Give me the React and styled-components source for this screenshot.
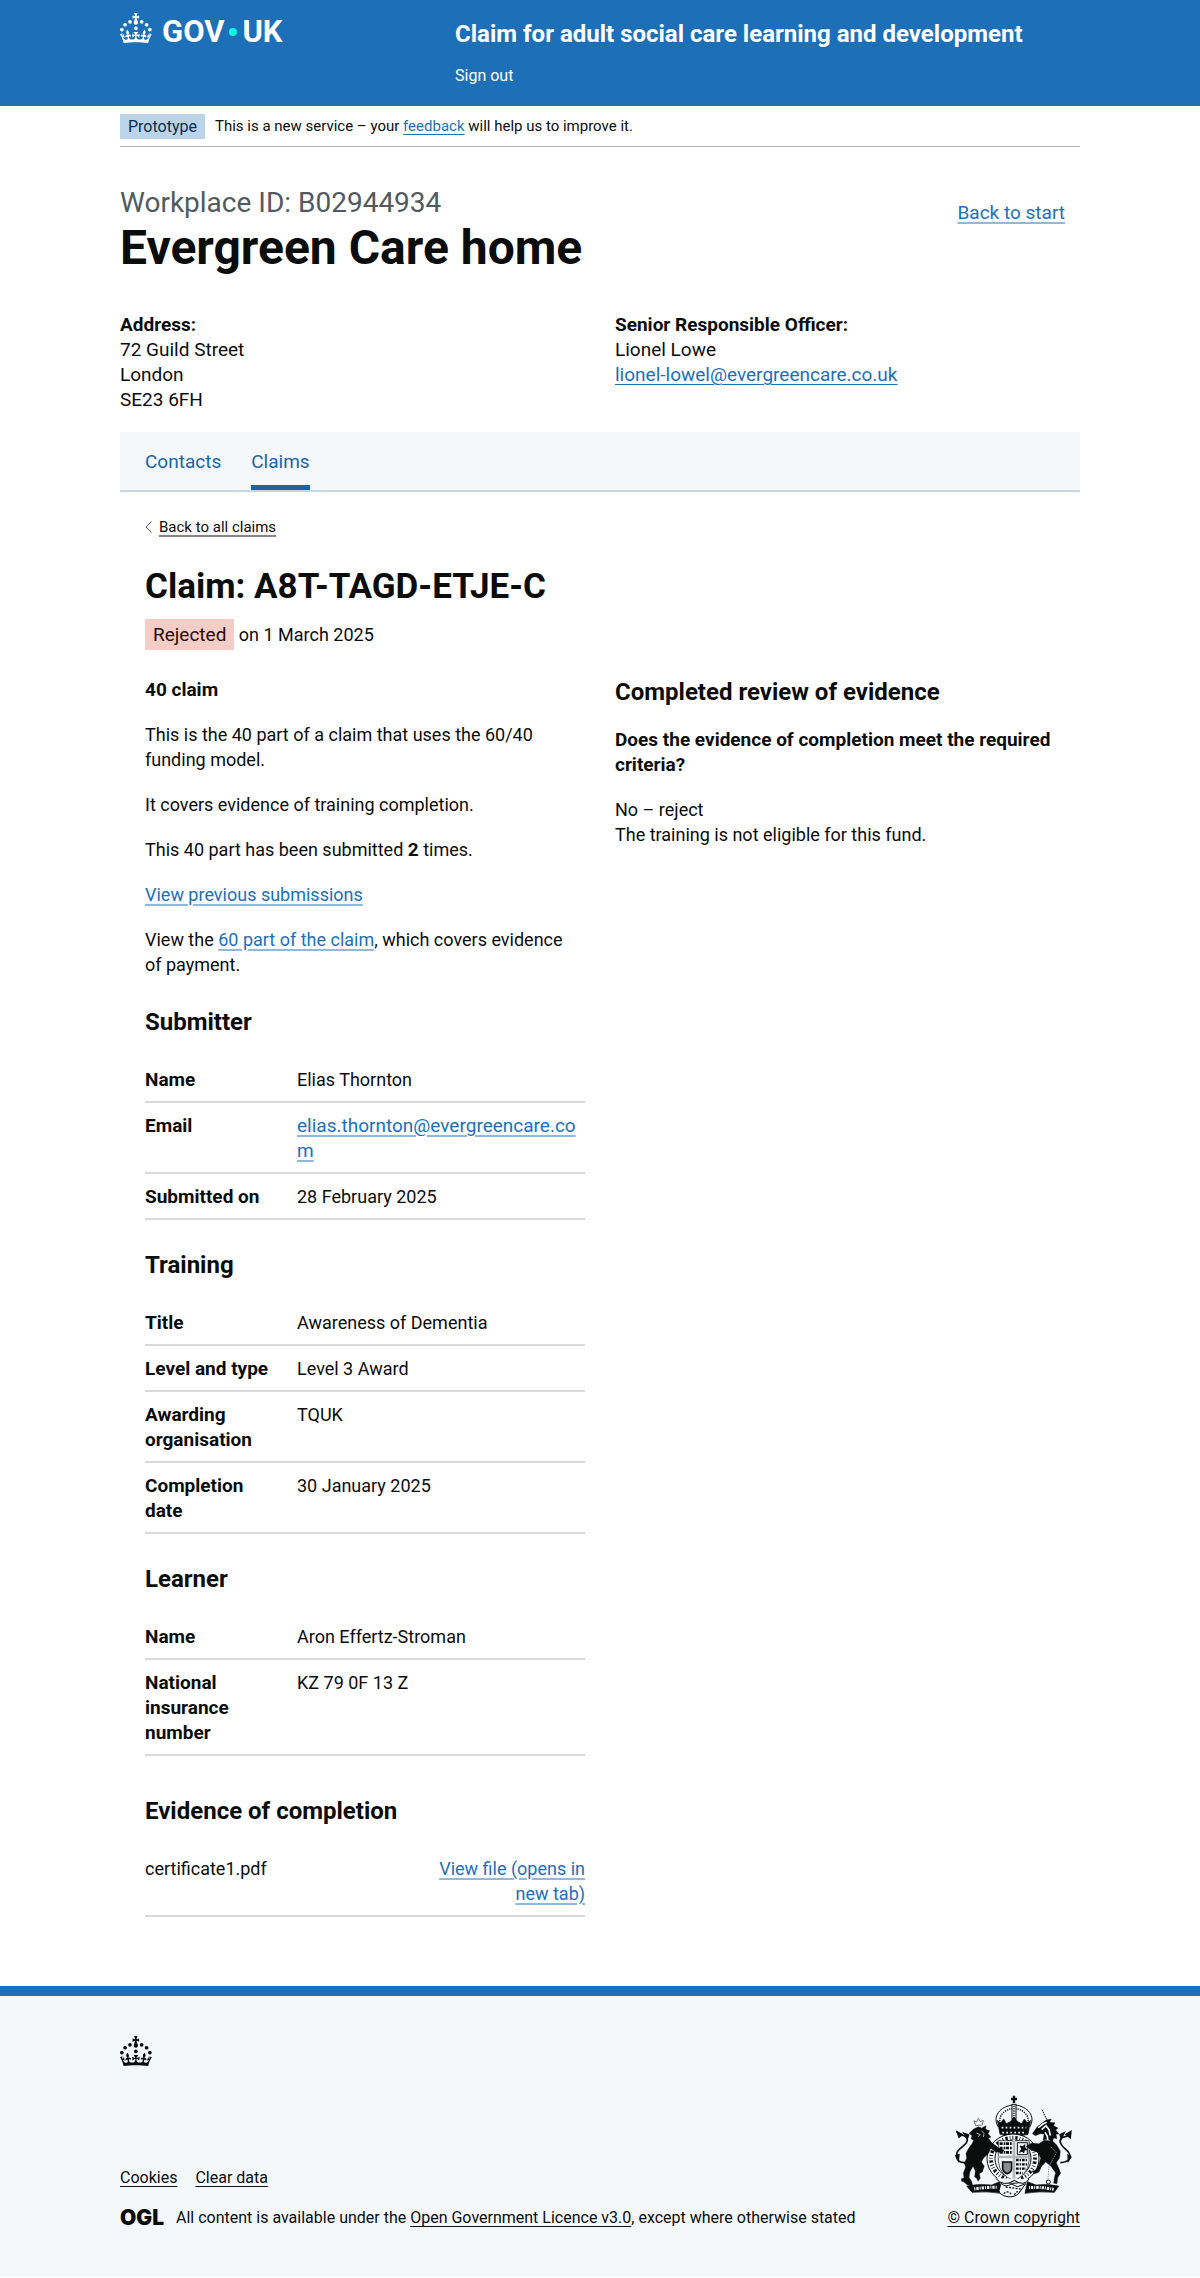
import React from "react";
import styled, { createGlobalStyle, css } from "styled-components";

const color = {
  text: "#0b0c0c",
  muted: "#505a5f",
  brand: "#1d70b8",
  link: "#1d70b8",
  navLink: "#1a65a6",
  surface: "#f4f8fb",
  rule: "#d8d9da",
};

const GlobalStyle = createGlobalStyle`
  *, *::before, *::after { box-sizing: border-box; }
  body {
    margin: 0;
    background: #fff;
    color: ${color.text};
    font-family: Roboto, "Liberation Sans", sans-serif;
    font-size: 18px;
    line-height: 25px;
  }
`;

const Container = styled.div`
  max-width: 960px;
  margin: 0 auto;
`;

const Link = styled.a`
  color: ${color.link};
  font-size: ${(p) => (p.$large ? "19px" : "inherit")};
  text-decoration: underline;
  text-decoration-color: ${(p) => (p.$solid ? "currentColor" : "#8eb8dc")};
  text-decoration-thickness: ${(p) => (p.$solid ? "1px" : "2px")};
  text-underline-offset: 3px;
`;

const DarkLink = styled(Link)`
  color: ${color.text};
  text-decoration-color: ${(p) => (p.$solid ? "currentColor" : "#858686")};
`;

/* Header */

const HeaderBar = styled.header`
  background: ${color.brand};
  color: #fff;
`;

const HeaderGrid = styled(Container)`
  display: grid;
  grid-template-columns: 1fr 2fr;
  column-gap: 15px;
  padding: 13px 0 20px;
`;

const HomeLink = styled.a`
  display: flex;
  align-self: start;
  align-items: center;
  gap: 10px;
  height: 30px;
  color: #fff;
  text-decoration: none;
`;

const Wordmark = styled.span`
  display: flex;
  align-items: center;
  gap: 5px;
  padding-top: 8px;
  font-size: 31px;
  font-weight: 700;
  line-height: 30px;
`;

const Dot = styled.span`
  width: 8px;
  height: 8px;
  border-radius: 50%;
  background: #00ffe0;
`;

const HeaderContent = styled.div`
  display: flex;
  flex-direction: column;
  align-items: flex-start;
  gap: 17px;
  padding: 6px 0 0 5px;
`;

const ServiceName = styled.a`
  color: #fff;
  font-size: 24px;
  font-weight: 700;
  line-height: 30px;
  text-decoration: none;
`;

const HeaderNavLink = styled.a`
  display: block;
  color: #fff;
  font-size: 16px;
  line-height: 20px;
  text-decoration: none;
`;

/* Phase banner */

const PhaseBanner = styled.div`
  display: flex;
  align-items: center;
  gap: 10px;
  padding: 8px 0 7px;
  border-bottom: 1px solid #b1b4b6;
  font-size: 15px;
  line-height: 25px;
`;

const PhaseTag = styled.strong`
  padding: 0 8px;
  background: #bbd4ea;
  color: #0c2d4a;
  font-size: 16px;
  font-weight: 400;
`;

/* Organisation */

const Main = styled.main`
  padding: 41px 0 69px;
`;

const TitleRow = styled.div`
  display: flex;
  justify-content: space-between;
  align-items: flex-start;
  margin-bottom: 39px;
`;

const Caption = styled.span`
  display: block;
  margin-bottom: 5px;
  color: ${color.muted};
  font-size: 28px;
  font-weight: 400;
  line-height: 30px;
`;

const PageTitle = styled.h1`
  margin: 0;
  font-size: 48px;
  font-weight: 700;
  line-height: 50px;
`;

const TitleAction = styled.div`
  padding: 12px 15px 0 0;
`;

const Columns = styled.div`
  display: grid;
  grid-template-columns: 1fr 1fr;
  column-gap: 30px;
`;

const Strong = styled.strong`
  font-size: 19px;
  font-weight: 700;
`;

const Lines = styled.address`
  display: flex;
  flex-direction: column;
  align-items: flex-start;
  font-size: 19px;
  font-style: normal;
`;

const SubNav = styled.nav`
  display: flex;
  gap: 30px;
  margin-top: 20px;
  padding: 0 25px;
  background: ${color.surface};
  border-bottom: 2px solid #c1d6e9;
`;

const SubNavLink = styled.a`
  padding: 17px 0 11px;
  border-bottom: 5px solid transparent;
  color: ${color.navLink};
  font-size: 19px;
  text-decoration: none;
  ${(p) =>
    p.$current &&
    css`
      border-bottom-color: ${color.navLink};
    `}
`;

/* Claim */

const ClaimHeader = styled.div`
  display: flex;
  flex-direction: column;
  align-items: flex-start;
  padding: 25px 0 30px 25px;
`;

const BackLinkRow = styled.div`
  display: flex;
  align-items: center;
  gap: 7px;
  margin-bottom: 30px;
  font-size: 15px;
  line-height: 20px;
`;

const ClaimTitle = styled.h2`
  margin: 0 0 15px;
  font-size: 35px;
  font-weight: 700;
  line-height: 40px;
`;

const Status = styled.p`
  margin: 0;
`;

const StatusTag = styled.strong`
  padding: 4px 8px;
  background: #f4cdc6;
  color: #2a0b06;
  font-size: 19px;
  font-weight: 400;
`;

const Details = styled.div`
  padding-left: 25px;
`;

const Heading = styled.h3`
  margin: ${(p) => p.$top || "0"} 0 20px;
  font-size: 24px;
  font-weight: 700;
  line-height: 30px;
`;

const Subheading = styled.h4`
  margin: 0 0 20px;
  font-size: 19px;
  font-weight: 700;
  line-height: 25px;
`;

const Paragraph = styled.p`
  margin: 0 0 20px;
  padding-right: 10px;
`;

const SummaryList = styled.dl`
  margin: 0;
`;

const SummaryRow = styled.div`
  display: grid;
  grid-template-columns: ${(p) => (p.$file ? "3fr 2fr" : "30% 1fr")};
  column-gap: ${(p) => (p.$file ? "0" : "20px")};
  padding: 10px 0 9px;
  border-bottom: 2px solid ${color.rule};
`;

const Key = styled.dt`
  font-size: 19px;
  font-weight: 700;
`;

const Value = styled.dd`
  margin: 0;
  overflow-wrap: anywhere;
`;

const FileName = styled.dt``;

const FileAction = styled.dd`
  margin: 0;
  text-align: right;
`;

/* Footer */

const FooterBar = styled.footer`
  padding: 40px 0 49px;
  background: ${color.surface};
  border-top: 10px solid ${color.brand};
  font-size: 16px;
  line-height: 20px;
`;

const FooterMeta = styled.div`
  display: flex;
  justify-content: space-between;
  align-items: flex-end;
  margin-top: 29px;
`;

const FooterLinks = styled.ul`
  display: flex;
  gap: 18px;
  margin: 0 0 20px;
  padding: 0;
  list-style: none;
`;

const Licence = styled.div`
  display: flex;
  align-items: center;
  gap: 12px;
`;

const OglMark = styled.span`
  font-family: Inter, Roboto, sans-serif;
  font-size: 21px;
  font-weight: 900;
  line-height: 20px;
`;

const Copyright = styled(DarkLink)`
  display: flex;
  flex-direction: column;
  align-items: center;
  gap: 10px;
`;

const Block = styled.svg`
  display: block;
  flex: none;
`;

function Crown() {
  return (
    <Block width="32" height="30" viewBox="0 0 64 60" fill="currentColor" aria-hidden="true">
      <circle cx="20" cy="17.6" r="3.7" />
      <circle cx="10.2" cy="23.5" r="3.7" />
      <circle cx="3.7" cy="33.2" r="3.7" />
      <circle cx="31.7" cy="30.6" r="3.7" />
      <circle cx="43.3" cy="17.6" r="3.7" />
      <circle cx="53.2" cy="23.5" r="3.7" />
      <circle cx="59.7" cy="33.2" r="3.7" />
      <path d="M33.1,9.8c.2-.1.3-.3.5-.5l4.6,2.4v-6.8l-4.6,1.5c-.1-.2-.3-.3-.5-.5l1.9-5.9h-6.7l1.9,5.9c-.2.1-.3.3-.5.5l-4.6-1.5v6.8l4.6-2.4c.1.2.3.3.5.5l-2.6,8c-.9,2.8,1.2,5.7,4.1,5.7h0c3,0,5.1-2.9,4.1-5.7l-2.6-8ZM37,37.9s-3.4,3.8-4.1,6.1c2.2,0,4.2-.5,6.4-2.8l-.7,8.5c-2-2.8-4.4-4.1-5.7-3.8.1,3.1.5,6.7,5.8,7.2,3.7.3,6.7-1.5,7-3.8.4-2.6-2-4.3-3.7-1.6-1.4-4.5,2.4-6.1,4.9-3.2-1.9-4.5-1.8-7.7,2.4-10.9,3,4,2.6,7.3-1.2,11.1,2.4-1.3,6.2,0,4,4.6-1.2-2.8-3.7-2.2-4.2.2-.3,1.7.7,3.7,3,4.2,1.9.3,4.7-.9,7-5.9-1.3,0-2.4.7-3.9,1.7l2.4-8c.6,2.3,1.4,3.7,2.2,4.5.6-1.6.5-2.8,0-5.3l5,1.8c-2.6,3.6-5.2,8.7-7.3,17.5-7.4-1.1-15.7-1.7-24.5-1.7h0c-8.8,0-17.1.6-24.5,1.7-2.1-8.9-4.7-13.9-7.3-17.5l5-1.8c-.5,2.5-.6,3.7,0,5.3.8-.8,1.6-2.3,2.2-4.5l2.4,8c-1.5-1-2.6-1.7-3.9-1.7,2.3,5,5.2,6.2,7,5.9,2.3-.4,3.3-2.4,3-4.2-.5-2.4-3-3.1-4.2-.2-2.2-4.6,1.6-6,4-4.6-3.7-3.7-4.2-7.1-1.2-11.1,4.2,3.2,4.3,6.4,2.4,10.9,2.5-2.8,6.3-1.3,4.9,3.2-1.8-2.7-4.1-1-3.7,1.6.3,2.3,3.3,4.1,7,3.8,5.4-.5,5.7-4.2,5.8-7.2-1.3-.2-3.7,1-5.7,3.8l-.7-8.5c2.2,2.3,4.2,2.7,6.4,2.8-.7-2.3-4.1-6.1-4.1-6.1h10.6,0Z" />
    </Block>
  );
}

function Crest() {
  const ink = color.text;
  const paper = color.surface;
  return (
    <Block width="117" height="103" viewBox="110 76 351 309" fill="none" stroke={ink} strokeWidth="4" aria-hidden="true">
      {/* royal crown */}
      <path d="M287 78v22M278 88h18" strokeWidth="7" />
      <path d="M240 172C220 140 246 110 283 106M334 172C354 140 328 110 291 106" strokeWidth="3" />
      <path d="M249 168C235 142 256 121 281 117M325 168C339 142 318 121 293 117" strokeWidth="4" strokeDasharray="4 3" />
      <rect x="281" y="104" width="12" height="44" fill={paper} strokeWidth="3" />
      <path d="M287 108v36" strokeDasharray="4 3" />
      <path d="M237 152l10 8 9-12 8 14 12-6 11-14 11 14 12 6 8-14 9 12 10-8-8 42q-42 12-84 0z" fill={ink} strokeWidth="2" />
      <path d="M250 174h74M252 189h70" stroke={paper} strokeWidth="5" strokeDasharray="5 7" />
      {/* garter and shield */}
      <ellipse cx="284" cy="267" rx="78" ry="74" fill={paper} strokeWidth="3" />
      <ellipse cx="284" cy="267" rx="66" ry="63" strokeWidth="11" strokeDasharray="3 6 7 6 2 6" />
      <ellipse cx="284" cy="267" rx="54" ry="56" fill={paper} strokeWidth="3" />
      <path d="M240 213h92v62q-4 42-46 58-42-16-46-58z" fill={paper} strokeWidth="2" />
      <path d="M244 222h36M244 235h38M244 248h36" strokeWidth="8" strokeDasharray="9 3 5 2" />
      <path d="M297 219h30v36h-30z" strokeWidth="3" />
      <path d="M304 248l6-10-5-9 9 3 5-7 1 10 6 5-8 1-2 9-4-6z" fill={ink} strokeWidth="3" />
      <path d="M253 277v20q2 12 14 15 12-4 13-15v-20z" fill="#8b8d8f" strokeWidth="5" />
      <path d="M293 271h36M293 284h34M293 297h30M293 310h20" strokeWidth="7" strokeDasharray="8 3 4 3" />
      <path d="M287 208v122M240 262h92" stroke="#b4b6b8" strokeWidth="8" />
      {/* lion */}
      <path d="M172 168l-5-15 8 4 5-11 6 10 9-4-3 14z" fill={paper} stroke="#777" strokeWidth="3" />
      <path d="M166 178l14-7 10 4 13-7-1 11 12 4-5 9 9 10-8 4 9 12 21 16 17 7-5 8-21-3-14-10-5 13-16 16-7 12 9 12-6 18-9 5 3 14-7 9-4-9-6-4 2-18-7-14-9 16-3 17 8 12 3 13-17-3-9-8-7-2-1-8 8-2-2-15 7-18-4-11 7-15-2-15 8-15 10-14 5-10-8-5 3-9-9-7z" fill={ink} strokeWidth="1" />
      <path d="M174 190l12 5-7 6M189 183l8 8-2 11" stroke={paper} strokeWidth="2" />
      <path d="M140 279c-30 1-31-29-14-43 17-13 26-22 18-33-7-10-22-2-28-17" strokeWidth="5" />
      <path d="M122 203l-6-17 16 9zM136 190l15 6-4 12zM112 258l10-3-2 18z" fill={ink} />
      {/* unicorn */}
      <path d="M371 120l17 35" strokeWidth="3" strokeDasharray="5 2" />
      <path d="M356 172l27-21 16-3-5 10 16 1-4 9 13 7-7 6 10 12-9 1 3 13-10-2-4 12-13-8-14 2 2-18-11-1-15 6-9-6z" fill={ink} strokeWidth="1" />
      <path d="M360 174l14-11 11-5M370 180l13-12 9 12 4 18M380 188l7 12 1 11" stroke={paper} strokeWidth="5" />
      <path d="M340 220l22 2 15-10 26 2 12 12 11 18-2 20-10 15 8 18 5 14-9 13-2 18-10-1 3-21 3-10-14-20-16-13-12 13-8 17-14 6-7-9 12-3 8-16 6-19-7-17-23-9-13-10z" fill={ink} strokeWidth="1" />
      <path d="M398 232l16 17-10 18-12 24-3 36" stroke="#8b8d8f" strokeWidth="3" strokeDasharray="4 3" />
      <circle cx="390" cy="337" r="6" strokeWidth="3" />
      <path d="M426 279c36-2 34-25 17-39-14-12-23-24-14-34 7-9 20-1 27-15" strokeWidth="5" />
      <path d="M456 205l2-20-15 9zM438 189l-13 6 4 12zM458 262l-9-6 1 18z" fill={ink} />
      {/* motto scroll */}
      <path d="M145 349q38-7 75-3l24-10 4 35q-44-7-87-3z" fill={ink} strokeWidth="2" />
      <path d="M421 349q-38-7-68-3l-26-10-7 35q45-7 88-3z" fill={ink} strokeWidth="2" />
      <path d="M168 358q36-6 70-5M332 354q34-3 74 5" stroke={paper} strokeWidth="9" strokeDasharray="3 3 7 3" />
      <path d="M232 326q24 28 56 6 30 20 44-4M248 341q16 14 30 2l20 8 24-9-20 28q-12 14-36 11-22-5-24-18z" fill={paper} strokeWidth="3" />
      <path d="M256 372q14-12 24 4M288 376q6-14 18-9M262 352l50 7" strokeWidth="4" strokeDasharray="6 4" />
    </Block>
  );
}

const submitter = [
  { key: "Name", value: "Elias Thornton" },
  { key: "Email", value: "elias.thornton@evergreencare.com", email: true },
  { key: "Submitted on", value: "28 February 2025" },
];

const training = [
  { key: "Title", value: "Awareness of Dementia" },
  { key: "Level and type", value: "Level 3 Award" },
  { key: "Awarding organisation", value: "TQUK" },
  { key: "Completion date", value: "30 January 2025" },
];

const learner = [
  { key: "Name", value: "Aron Effertz-Stroman" },
  { key: "National insurance number", value: "KZ 79 0F 13 Z" },
];

function Summary({ rows }) {
  return (
    <SummaryList>
      {rows.map((row) => (
        <SummaryRow key={row.key}>
          <Key>{row.key}</Key>
          <Value>
            {row.email ? (
              <Link $large href={`mailto:${row.value}`}>
                {row.value}
              </Link>
            ) : (
              row.value
            )}
          </Value>
        </SummaryRow>
      ))}
    </SummaryList>
  );
}

export default function App() {
  return (
    <>
      <GlobalStyle />
      <HeaderBar>
        <HeaderGrid>
          <HomeLink href="#home">
            <Crown />
            <Wordmark>
              GOV
              <Dot />
              UK
            </Wordmark>
          </HomeLink>
          <HeaderContent>
            <ServiceName href="#service">
              Claim for adult social care learning and development
            </ServiceName>
            <nav>
              <HeaderNavLink href="#sign-out">Sign out</HeaderNavLink>
            </nav>
          </HeaderContent>
        </HeaderGrid>
      </HeaderBar>

      <Container>
        <PhaseBanner>
          <PhaseTag>Prototype</PhaseTag>
          <span>
            This is a new service – your{" "}
            <Link $solid href="#feedback">
              feedback
            </Link>{" "}
            will help us to improve it.
          </span>
        </PhaseBanner>

        <Main>
          <TitleRow>
            <PageTitle>
              <Caption>Workplace ID: B02944934</Caption>
              Evergreen Care home
            </PageTitle>
            <TitleAction>
              <Link $large href="#start">
                Back to start
              </Link>
            </TitleAction>
          </TitleRow>

          <Columns>
            <Lines>
              <Strong>Address:</Strong>
              <span>72 Guild Street</span>
              <span>London</span>
              <span>SE23 6FH</span>
            </Lines>
            <Lines>
              <Strong>Senior Responsible Officer:</Strong>
              <span>Lionel Lowe</span>
              <Link $solid href="mailto:lionel-lowel@evergreencare.co.uk">
                lionel-lowel@evergreencare.co.uk
              </Link>
            </Lines>
          </Columns>

          <SubNav aria-label="Organisation">
            <SubNavLink href="#contacts">Contacts</SubNavLink>
            <SubNavLink href="#claims" $current aria-current="page">
              Claims
            </SubNavLink>
          </SubNav>

          <ClaimHeader>
            <BackLinkRow>
              <Block width="7" height="12" viewBox="0 0 7 12" fill="none" stroke={color.muted} aria-hidden="true">
                <path d="M6.5 .5 1 6l5.5 5.5" />
              </Block>
              <DarkLink href="#all-claims">Back to all claims</DarkLink>
            </BackLinkRow>
            <ClaimTitle>Claim: A8T-TAGD-ETJE-C</ClaimTitle>
            <Status>
              <StatusTag>Rejected</StatusTag> on 1 March 2025
            </Status>
          </ClaimHeader>

          <Columns>
            <Details>
              <Subheading>40 claim</Subheading>
              <Paragraph>
                This is the 40 part of a claim that uses the 60/40 funding model.
              </Paragraph>
              <Paragraph>It covers evidence of training completion.</Paragraph>
              <Paragraph>
                This 40 part has been submitted <Strong>2</Strong> times.
              </Paragraph>
              <Paragraph>
                <Link href="#previous">View previous submissions</Link>
              </Paragraph>
              <Paragraph>
                View the <Link href="#sixty">60 part of the claim</Link>, which covers evidence of
                payment.
              </Paragraph>

              <Heading $top="30px">Submitter</Heading>
              <Summary rows={submitter} />

              <Heading $top="30px">Training</Heading>
              <Summary rows={training} />

              <Heading $top="30px">Learner</Heading>
              <Summary rows={learner} />

              <Heading $top="40px">Evidence of completion</Heading>
              <SummaryList>
                <SummaryRow $file>
                  <FileName>certificate1.pdf</FileName>
                  <FileAction>
                    <Link href="#certificate1">View file (opens in new tab)</Link>
                  </FileAction>
                </SummaryRow>
              </SummaryList>
            </Details>

            <section>
              <Heading>Completed review of evidence</Heading>
              <Subheading>
                Does the evidence of completion meet the required criteria?
              </Subheading>
              <Paragraph>
                No – reject
                <br />
                The training is not eligible for this fund.
              </Paragraph>
            </section>
          </Columns>
        </Main>
      </Container>

      <FooterBar>
        <Container>
          <Crown />
          <FooterMeta>
            <div>
              <FooterLinks>
                <li>
                  <DarkLink $solid href="#cookies">
                    Cookies
                  </DarkLink>
                </li>
                <li>
                  <DarkLink $solid href="#clear-data">
                    Clear data
                  </DarkLink>
                </li>
              </FooterLinks>
              <Licence>
                <OglMark>OGL</OglMark>
                <span>
                  All content is available under the{" "}
                  <DarkLink $solid href="#licence">
                    Open Government Licence v3.0
                  </DarkLink>
                  , except where otherwise stated
                </span>
              </Licence>
            </div>
            <Copyright $solid href="#copyright">
              <Crest />
              <span>© Crown copyright</span>
            </Copyright>
          </FooterMeta>
        </Container>
      </FooterBar>
    </>
  );
}
